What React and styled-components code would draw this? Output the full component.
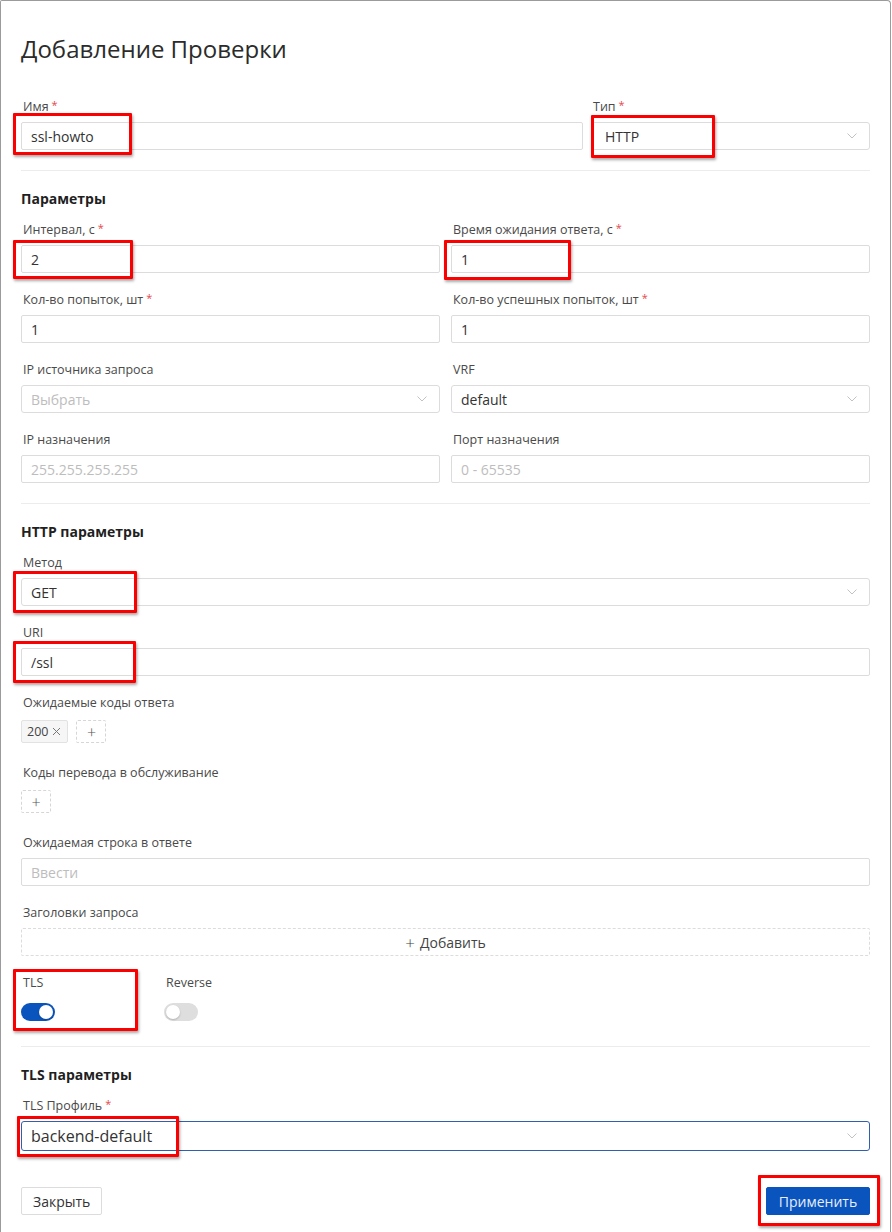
import React from 'react';
import styled, { createGlobalStyle } from 'styled-components';

const GlobalStyle = createGlobalStyle`
  * { box-sizing: border-box; }
  body {
    margin: 0;
    background: #ffffff;
    font-family: "Open Sans", "Noto Sans", sans-serif;
    color: #333;
  }
`;

const Page = styled.div`
  position: relative;
  width: 892px;
  height: 1232px;
  overflow: hidden;
  background: #fff;
`;

const Modal = styled.div`
  width: 891px;
  min-height: 1232px;
  border: 1px solid #9b9b9b;
  border-bottom: none;
  border-radius: 2px 4px 0 0;
  padding: 33px 20px 0;
  background: #fff;
`;

const Title = styled.h2`
  margin: 0 0 33px;
  font-size: 24px;
  line-height: 30px;
  font-weight: 400;
  color: #2b2b2b;
`;

const Divider = styled.div`
  height: 1px;
  background: #ececec;
  margin: ${p => p.$top ?? 3}px 0 18px;
`;

const SectionTitle = styled.h3`
  margin: 0 0 11px;
  font-size: 14px;
  line-height: 20px;
  font-weight: 700;
  color: #1f1f1f;
`;

const Grid = styled.div`
  display: grid;
  grid-template-columns: ${p => p.$cols || '1fr'};
  column-gap: ${p => p.$gap || 11}px;
`;

const Field = styled.div`
  margin-bottom: ${p => p.$mb ?? 17}px;
  min-width: 0;
`;

const Label = styled.div`
  height: 20px;
  font-size: 12.5px;
  line-height: 20px;
  color: #4a4a4a;
  padding-left: 2px;
  margin-bottom: 5px;
  white-space: nowrap;
`;

const Req = styled.span`
  color: #e5484d;
  font-size: 11px;
  line-height: 0;
  margin-left: 3px;
  position: relative;
  top: -2px;
`;

const Input = styled.input`
  display: block;
  width: 100%;
  height: 28px;
  border: 1px solid #dcdcdc;
  border-radius: 2px;
  padding: 0 9px;
  font-family: inherit;
  font-size: 14px;
  color: #333;
  background: #fff;
  outline: none;
  &::placeholder { color: #bdbdbd; }
`;

const SelectBox = styled.div`
  display: flex;
  align-items: center;
  justify-content: space-between;
  height: ${p => (p.$big ? 30 : 28)}px;
  border: 1px solid ${p => (p.$focus ? '#2f5fae' : '#dcdcdc')};
  border-radius: 3px;
  padding: 0 12px 0 ${p => p.$pl || 9}px;
  font-size: ${p => (p.$big ? 16 : 14)}px;
  color: ${p => (p.$placeholder ? '#bdbdbd' : '#333')};
  background: #fff;
`;

const Chevron = () => (
  <svg width="10" height="6" viewBox="0 0 10 6" fill="none">
    <path d="M0.5 0.5 L5 5 L9.5 0.5" stroke="#c2c2c2" strokeWidth="1" />
  </svg>
);

const TagRow = styled.div`
  display: flex;
  gap: 8px;
  padding-top: 2px;
  margin-bottom: 20px;
`;

const Tag = styled.div`
  display: flex;
  align-items: center;
  gap: 4px;
  height: 23px;
  padding: 0 6px 0 5px;
  background: #f6f6f6;
  border: 1px solid #e2e2e2;
  border-radius: 2px;
  font-size: 12.5px;
  color: #444;
`;

const AddTag = styled.div`
  width: 30px;
  height: 23px;
  border: 1px dashed #d6d6d6;
  border-radius: 2px;
  display: flex;
  align-items: center;
  justify-content: center;
  color: #555;
  font-size: 16px;
  font-weight: 300;
`;

const DashedButton = styled.div`
  height: 28px;
  border: 1px dashed #dcdcdc;
  border-radius: 2px;
  display: flex;
  align-items: center;
  justify-content: center;
  gap: 5px;
  font-size: 14px;
  color: #444;
  margin-bottom: 17px;
`;

const Plus = styled.span`
  font-size: 17px;
  font-weight: 300;
`;

const SwitchRow = styled.div`
  display: flex;
  gap: 109px;
`;

const SwitchField = styled.div`
  display: flex;
  flex-direction: column;
  align-items: flex-start;
`;

const SwitchLabel = styled(Label)`
  margin-bottom: 10px;
`;

const Switch = styled.div`
  position: relative;
  width: 34px;
  height: 18px;
  border-radius: 9px;
  background: ${p => (p.$on ? '#0a54bd' : '#dedede')};
  &::after {
    content: '';
    position: absolute;
    top: 2px;
    left: ${p => (p.$on ? 18 : 2)}px;
    width: 14px;
    height: 14px;
    border-radius: 50%;
    background: #fff;
    box-shadow: 0 1px 2px rgba(0, 0, 0, 0.2);
  }
`;

const Footer = styled.div`
  display: flex;
  justify-content: space-between;
  margin-top: 36px;
`;

const Button = styled.button`
  height: 28px;
  padding: 0 11px;
  border-radius: 2px;
  font-family: inherit;
  font-size: 14px;
  border: 1px solid ${p => (p.$primary ? '#0a54bd' : '#dcdcdc')};
  background: ${p => (p.$primary ? '#0a54bd' : '#fff')};
  color: ${p => (p.$primary ? '#e8eefb' : '#333')};
  width: ${p => p.$w}px;
`;

const Mark = styled.div`
  position: absolute;
  left: ${p => p.$x}px;
  top: ${p => p.$y}px;
  width: ${p => p.$w}px;
  height: ${p => p.$h}px;
  border: 3px solid #fb0000;
  border-radius: 1px;
  box-shadow: 1px 2px 3px rgba(0, 0, 0, 0.35);
  pointer-events: none;
`;

const marks = [
  { x: 13, y: 113, w: 119, h: 42 },
  { x: 591, y: 115, w: 124, h: 43 },
  { x: 13, y: 240, w: 120, h: 39 },
  { x: 444, y: 240, w: 127, h: 40 },
  { x: 13, y: 571, w: 124, h: 42 },
  { x: 13, y: 641, w: 123, h: 42 },
  { x: 13, y: 969, w: 125, h: 62 },
  { x: 17, y: 1116, w: 162, h: 41 },
  { x: 758, y: 1175, w: 122, h: 51 },
];

const TextField = ({ label, req, value, placeholder, mb }) => (
  <Field $mb={mb}>
    <Label>
      {label}
      {req && <Req>*</Req>}
    </Label>
    <Input readOnly value={value || ''} placeholder={placeholder} />
  </Field>
);

const SelectField = ({ label, req, value, placeholder, mb, big, focus, pl }) => (
  <Field $mb={mb}>
    <Label>
      {label}
      {req && <Req>*</Req>}
    </Label>
    <SelectBox $big={big} $focus={focus} $placeholder={!value} $pl={pl}>
      <span>{value || placeholder}</span>
      <Chevron />
    </SelectBox>
  </Field>
);

export default function App() {
  return (
    <Page>
      <GlobalStyle />
      <Modal>
        <Title>Добавление Проверки</Title>

        <Grid $cols="1fr 279px" $gap={8}>
          <TextField label="Имя" req value="ssl-howto" mb={0} />
          <SelectField label="Тип" req value="HTTP" mb={0} pl={13} />
        </Grid>
        <Divider $top={20} />

        <SectionTitle>Параметры</SectionTitle>
        <Grid $cols="1fr 1fr">
          <TextField label="Интервал, с" req value="2" />
          <TextField label="Время ожидания ответа, с" req value="1" />
          <TextField label="Кол-во попыток, шт" req value="1" />
          <TextField label="Кол-во успешных попыток, шт" req value="1" />
          <SelectField label="IP источника запроса" placeholder="Выбрать" />
          <SelectField label="VRF" value="default" />
          <TextField label="IP назначения" placeholder="255.255.255.255" />
          <TextField label="Порт назначения" placeholder="0 - 65535" />
        </Grid>
        <Divider $top={3} />

        <SectionTitle>HTTP параметры</SectionTitle>
        <SelectField label="Метод" value="GET" />
        <TextField label="URI" value="/ssl" />

        <Field $mb={0}>
          <Label>Ожидаемые коды ответа</Label>
          <TagRow>
            <Tag>
              200
              <svg width="9" height="9" viewBox="0 0 9 9">
                <path d="M1 1 L8 8 M8 1 L1 8" stroke="#777" strokeWidth="1" />
              </svg>
            </Tag>
            <AddTag>+</AddTag>
          </TagRow>
        </Field>

        <Field $mb={0}>
          <Label>Коды перевода в обслуживание</Label>
          <TagRow>
            <AddTag>+</AddTag>
          </TagRow>
        </Field>

        <TextField label="Ожидаемая строка в ответе" placeholder="Ввести" />

        <Field $mb={0}>
          <Label>Заголовки запроса</Label>
          <DashedButton>
            <Plus>+</Plus>
            Добавить
          </DashedButton>
        </Field>

        <SwitchRow>
          <SwitchField>
            <SwitchLabel>TLS</SwitchLabel>
            <Switch $on />
          </SwitchField>
          <SwitchField>
            <SwitchLabel>Reverse</SwitchLabel>
            <Switch />
          </SwitchField>
        </SwitchRow>
        <Divider $top={25} />

        <SectionTitle>TLS параметры</SectionTitle>
        <SelectField label="TLS Профиль" req value="backend-default" big focus mb={0} />

        <Footer>
          <Button $w={81}>Закрыть</Button>
          <Button $primary $w={104}>Применить</Button>
        </Footer>
      </Modal>

      {marks.map((m, i) => (
        <Mark key={i} $x={m.x} $y={m.y} $w={m.w} $h={m.h} />
      ))}
    </Page>
  );
}
